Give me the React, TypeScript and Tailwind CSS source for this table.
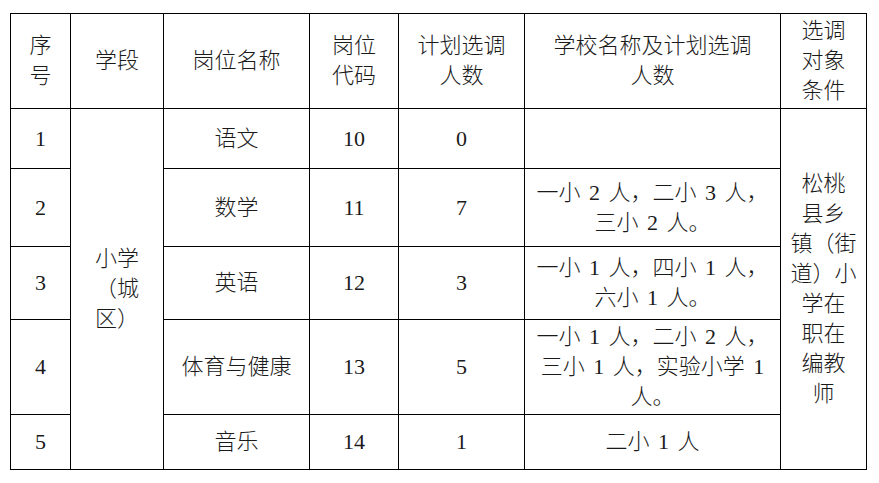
const font = '[font-family:"Liberation_Serif","Noto_Sans_CJK_SC",serif]';

type Row = {
  no: string;
  name: string;
  code: string;
  count: string;
  schools: string[];
  h: string;
};

const rows: Row[] = [
  { no: "1", name: "语文", code: "10", count: "0", schools: [], h: "h-[60px]" },
  { no: "2", name: "数学", code: "11", count: "7", schools: ["一小 2 人，二小 3 人，", "三小 2 人。"], h: "h-[78px]" },
  { no: "3", name: "英语", code: "12", count: "3", schools: ["一小 1 人，四小 1 人，", "六小 1 人。"], h: "h-[73px]" },
  {
    no: "4",
    name: "体育与健康",
    code: "13",
    count: "5",
    schools: ["一小 1 人，二小 2 人，", "三小 1 人，实验小学 1", "人。"],
    h: "h-[95px]",
  },
  { no: "5", name: "音乐", code: "14", count: "1", schools: ["二小 1 人"], h: "h-[55px]" },
];

function Lines({ items }: { items: string[] }) {
  return (
    <>
      {items.map((t, i) => (
        <div key={i} className="whitespace-pre">
          {t}
        </div>
      ))}
    </>
  );
}

const cell = "border border-black text-center align-middle p-0 font-light";

export default function App() {
  return (
    <div className={`min-h-screen bg-white pl-[10px] pt-[13px] text-[22px] leading-[30px] text-[#1a1a1a] ${font}`}>
      <table className="table-fixed border-collapse w-[856px]">
        <colgroup>
          <col className="w-[60px]" />
          <col className="w-[93px]" />
          <col className="w-[146px]" />
          <col className="w-[89px]" />
          <col className="w-[126px]" />
          <col className="w-[256px]" />
          <col className="w-[86px]" />
        </colgroup>
        <thead>
          <tr className="h-[95px]">
            <th className={cell}>
              <Lines items={["序", "号"]} />
            </th>
            <th className={cell}>学段</th>
            <th className={cell}>岗位名称</th>
            <th className={cell}>
              <Lines items={["岗位", "代码"]} />
            </th>
            <th className={cell}>
              <Lines items={["计划选调", "人数"]} />
            </th>
            <th className={cell}>
              <Lines items={["学校名称及计划选调", "人数"]} />
            </th>
            <th className={cell}>
              <Lines items={["选调", "对象", "条件"]} />
            </th>
          </tr>
        </thead>
        <tbody>
          {rows.map((r, i) => (
            <tr key={r.no} className={r.h}>
              <td className={cell}>{r.no}</td>
              {i === 0 && (
                <td rowSpan={5} className={cell}>
                  <Lines items={["小学", "（城", "区）"]} />
                </td>
              )}
              <td className={cell}>{r.name}</td>
              <td className={cell}>{r.code}</td>
              <td className={cell}>{r.count}</td>
              <td className={`${cell} [word-spacing:3px]`}>
                <Lines items={r.schools} />
              </td>
              {i === 0 && (
                <td rowSpan={5} className={cell}>
                  <Lines items={["松桃", "县乡", "镇（街", "道）小", "学在", "职在", "编教", "师"]} />
                </td>
              )}
            </tr>
          ))}
        </tbody>
      </table>
    </div>
  );
}
